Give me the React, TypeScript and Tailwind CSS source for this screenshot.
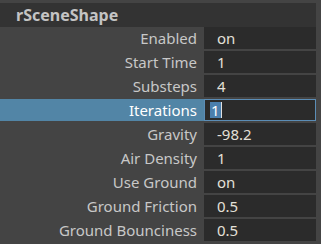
import React from "react";

const rows: { label: string; value: string; active?: boolean }[] = [
  { label: "Enabled", value: "on" },
  { label: "Start Time", value: "1" },
  { label: "Substeps", value: "4" },
  { label: "Iterations", value: "1", active: true },
  { label: "Gravity", value: "-98.2" },
  { label: "Air Density", value: "1" },
  { label: "Use Ground", value: "on" },
  { label: "Ground Friction", value: "0.5" },
  { label: "Ground Bounciness", value: "0.5" },
];

export default function App() {
  return (
    <div
      className="w-[321px] h-[244px] bg-[#444444] overflow-hidden pt-[3px] pr-[5px]"
      style={{ fontFamily: '"Noto Sans", "DejaVu Sans", sans-serif' }}
    >
      <div className="h-[24px] bg-[#333333] flex items-center pl-[16px] text-[16px] font-bold text-[#c4c4c4] leading-none">
        rSceneShape
      </div>
      <div className="flex flex-col gap-[2px]">
        {rows.map((r) => (
          <div key={r.label} className="flex h-[22px]">
            <div
              className={
                r.active
                  ? "w-[204px] bg-[#5285a6] text-white text-[15px] leading-none flex items-center justify-end pr-[7px]"
                  : "w-[204px] text-[#c8c8c8] text-[15px] leading-none flex items-center justify-end pr-[7px]"
              }
            >
              {r.label}
            </div>
            {r.active ? (
              <div className="flex-1 bg-[#2b2b2b] border border-[#5b8db6] flex items-center pl-[5px] text-[15px] leading-none text-white">
                <span className="bg-[#4b7fae] h-[16px] flex items-center px-[1px]">1</span>
                <span className="w-[1px] h-[16px] bg-[#e0e0e0]" />
              </div>
            ) : (
              <div className="flex-1 bg-[#2b2b2b] flex items-center pl-[13px] text-[15px] leading-none text-[#e4e0d8]">
                {r.value}
              </div>
            )}
          </div>
        ))}
      </div>
    </div>
  );
}
